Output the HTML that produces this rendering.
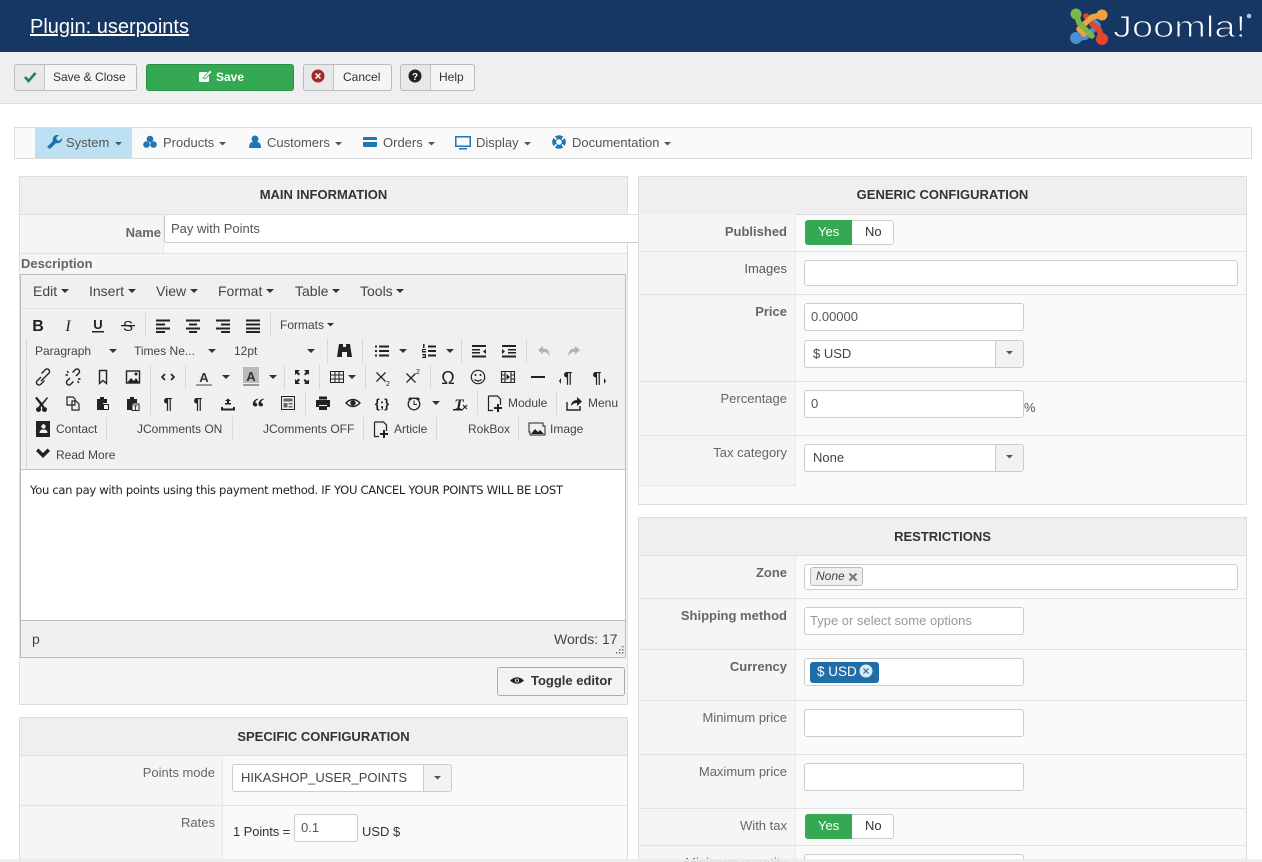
<!DOCTYPE html>
<html><head><meta charset="utf-8"><style>
html,body{margin:0;padding:0;background:#fff}
#p{position:relative;width:1262px;height:862px;overflow:hidden;font:13px/16px "Liberation Sans",sans-serif;color:#333}
.b{position:absolute;box-sizing:border-box}
.t{position:absolute;white-space:nowrap;line-height:16px}
.i{position:absolute;box-sizing:border-box;background:#fff;border:1px solid #ccc;border-radius:3px;white-space:nowrap;line-height:26px;padding-left:8px;color:#555;font-size:13px}
.l{position:absolute;white-space:nowrap;text-align:right;color:#666;font-size:13px;margin-top:1px}
.lb{font-weight:bold}
.h{position:absolute;box-sizing:border-box;height:38px;background:#efefef;border-bottom:1px solid #ddd;text-align:center;font-weight:bold;font-size:13px;line-height:36px;color:#333}
.btn{position:absolute;box-sizing:border-box;height:27px;background:#f5f5f5;border:1px solid #bbb;border-radius:3px;color:#333;font-size:12px}
.ib{position:absolute;left:0;top:0;bottom:0;background:#e8e8e8;border-right:1px solid #c4c4c4;border-radius:2px 0 0 2px}
.m{position:absolute;top:135px;font-size:13px;color:#555;white-space:nowrap;line-height:16px}
.e{position:absolute;font-size:12px;color:#444;white-space:nowrap;line-height:16px}
.s{position:absolute;width:1px;background:#d9d9d9}
.r{position:absolute;height:1px;background:#e3e3e3}
.sa{position:absolute;width:28px;background:#f2f2f2;border-left:1px solid #ccc;box-sizing:border-box;right:0;top:0;bottom:0;border-radius:0 3px 3px 0}
</style></head><body><div id="p">

<div class="b" style="left:0;top:0;width:1262px;height:52px;background:#163763"></div>
<a class="t" style="left:30px;top:15px;font-size:20px;line-height:24px;color:#fff;text-decoration:underline">Plugin: userpoints</a>
<div class="b" style="left:0;top:52px;width:1262px;height:52px;background:#efefef;border-bottom:1px solid #ddd"></div>

<div class="btn" style="left:14px;top:64px;width:123px"><div class="ib" style="width:29px"></div><span class="t" style="left:38px;top:4px">Save &amp; Close</span></div>
<div class="btn" style="left:146px;top:64px;width:148px;background:#34a853;border-color:#2b8f46;color:#fff;font-weight:bold"><span class="t" style="left:69px;top:4px">Save</span></div>
<div class="btn" style="left:303px;top:64px;width:89px"><div class="ib" style="width:29px"></div><span class="t" style="left:39px;top:4px">Cancel</span></div>
<div class="btn" style="left:400px;top:64px;width:75px"><div class="ib" style="width:29px"></div><span class="t" style="left:38px;top:4px">Help</span></div>

<div class="b" style="left:14px;top:127px;width:1238px;height:32px;background:#fafafa;border:1px solid #ddd"></div>
<div class="b" style="left:35px;top:128px;width:97px;height:30px;background:#bbe1f3"></div>
<span class="m" style="left:66px">System</span>
<span class="m" style="left:163px">Products</span>
<span class="m" style="left:267px">Customers</span>
<span class="m" style="left:383px">Orders</span>
<span class="m" style="left:476px">Display</span>
<span class="m" style="left:572px">Documentation</span>

<!-- left panel -->
<div class="b" style="left:19px;top:176px;width:609px;height:529px;background:#f5f5f5;border:1px solid #ddd"></div>
<div class="h" style="left:20px;top:177px;width:607px">MAIN INFORMATION</div>
<div class="b" style="left:163px;top:214px;width:464px;height:39px;background:#fafafa;border-left:1px solid #e8e8e8"></div>
<div class="r" style="left:20px;top:253px;width:607px"></div>
<div class="l lb" style="left:60px;width:101px;top:224px">Name</div>
<div class="i" style="left:164px;top:214px;width:490px;height:29px;padding-left:6px;line-height:27px;border-top-color:#ddd">Pay with Points</div>
<div class="t" style="left:21px;top:256px;font-weight:bold;color:#666">Description</div>

<div class="b" style="left:20px;top:274px;width:606px;height:384px;background:#f0f0f0;border:1px solid #bbb"></div>
<div class="r" style="left:21px;top:308px;width:604px;background:#e2e2e2"></div>
<div class="b" style="left:21px;top:469px;width:604px;height:152px;background:#fff;border-top:1px solid #c4c4c4;border-bottom:1px solid #bbb"></div>
<div class="t" style="left:30px;top:482px;font-size:11.6px;color:#222;font-family:'DejaVu Sans','Liberation Sans',sans-serif;letter-spacing:-.33px">You can pay with points using this payment method. IF YOU CANCEL YOUR POINTS WILL BE LOST</div>

<span class="e" style="left:33px;top:283px;font-size:14px">Edit</span>
<span class="e" style="left:89px;top:283px;font-size:14px">Insert</span>
<span class="e" style="left:156px;top:283px;font-size:14px">View</span>
<span class="e" style="left:218px;top:283px;font-size:14px">Format</span>
<span class="e" style="left:295px;top:283px;font-size:14px">Table</span>
<span class="e" style="left:360px;top:283px;font-size:14px">Tools</span>
<span class="e" style="left:280px;top:317px">Formats</span>
<span class="e" style="left:35px;top:343px">Paragraph</span>
<span class="e" style="left:134px;top:343px">Times Ne...</span>
<span class="e" style="left:234px;top:343px">12pt</span>
<span class="e" style="left:508px;top:395px">Module</span>
<span class="e" style="left:588px;top:395px">Menu</span>
<span class="e" style="left:56px;top:421px">Contact</span>
<span class="e" style="left:137px;top:421px">JComments ON</span>
<span class="e" style="left:263px;top:421px">JComments OFF</span>
<span class="e" style="left:394px;top:421px">Article</span>
<span class="e" style="left:468px;top:421px">RokBox</span>
<span class="e" style="left:550px;top:421px">Image</span>
<span class="e" style="left:56px;top:447px">Read More</span>
<span class="e" style="left:32px;top:631px;font-size:14px">p</span>
<span class="e" style="left:554px;top:631px;font-size:14px">Words: 17</span>

<div class="s" style="left:145px;top:313px;height:24px"></div><div class="s" style="left:270px;top:313px;height:24px"></div>
<div class="s" style="left:26px;top:339px;height:24px"></div><div class="s" style="left:327px;top:339px;height:24px"></div><div class="s" style="left:362px;top:339px;height:24px"></div><div class="s" style="left:461px;top:339px;height:24px"></div><div class="s" style="left:526px;top:339px;height:24px"></div>
<div class="s" style="left:26px;top:365px;height:24px"></div><div class="s" style="left:150px;top:365px;height:24px"></div><div class="s" style="left:185px;top:365px;height:24px"></div><div class="s" style="left:284px;top:365px;height:24px"></div><div class="s" style="left:319px;top:365px;height:24px"></div><div class="s" style="left:365px;top:365px;height:24px"></div><div class="s" style="left:430px;top:365px;height:24px"></div>
<div class="s" style="left:26px;top:391px;height:24px"></div><div class="s" style="left:150px;top:391px;height:24px"></div><div class="s" style="left:305px;top:391px;height:24px"></div><div class="s" style="left:477px;top:391px;height:24px"></div><div class="s" style="left:556px;top:391px;height:24px"></div>
<div class="s" style="left:26px;top:417px;height:24px"></div><div class="s" style="left:106px;top:417px;height:24px"></div><div class="s" style="left:232px;top:417px;height:24px"></div><div class="s" style="left:363px;top:417px;height:24px"></div><div class="s" style="left:436px;top:417px;height:24px"></div><div class="s" style="left:518px;top:417px;height:24px"></div>
<div class="s" style="left:26px;top:443px;height:26px"></div>

<div class="btn" style="left:497px;top:667px;width:128px;height:29px;background:#f3f3f3;font-weight:bold;font-size:13px;border-color:#aaa"><span class="t" style="left:33px;top:5px">Toggle editor</span></div>

<!-- specific -->
<div class="b" style="left:19px;top:717px;width:609px;height:160px;background:#fafafa;border:1px solid #ddd"></div>
<div class="h" style="left:20px;top:718px;width:607px;line-height:37px">SPECIFIC CONFIGURATION</div>
<div class="b" style="left:20px;top:756px;width:203px;height:110px;background:#f5f5f5;border-right:1px solid #e8e8e8"></div>
<div class="r" style="left:20px;top:805px;width:607px"></div>
<div class="r" style="left:20px;top:859px;width:607px"></div>
<div class="l" style="left:60px;width:155px;top:764px">Points mode</div>
<div class="i" style="left:232px;top:764px;width:220px;height:28px;color:#444">HIKASHOP_USER_POINTS<div class="sa"></div></div>
<div class="l" style="left:60px;width:155px;top:814px">Rates</div>
<span class="t" style="left:233px;top:824px;color:#333;letter-spacing:-.1px">1 Points =</span>
<div class="i" style="left:294px;top:814px;width:64px;height:28px;line-height:25px;padding-left:6px">0.1</div>
<span class="t" style="left:362px;top:824px;color:#333">USD $</span>

<!-- generic -->
<div class="b" style="left:638px;top:176px;width:609px;height:329px;background:#fafafa;border:1px solid #ddd"></div>
<div class="h" style="left:639px;top:177px;width:607px">GENERIC CONFIGURATION</div>
<div class="b" style="left:639px;top:214px;width:157px;height:272px;background:#f5f5f5;border-right:1px solid #e8e8e8;border-bottom:1px solid #e8e8e8"></div>
<div class="r" style="left:639px;top:251px;width:607px"></div>
<div class="r" style="left:639px;top:294px;width:607px"></div>
<div class="r" style="left:639px;top:381px;width:607px"></div>
<div class="r" style="left:639px;top:435px;width:607px"></div>
<div class="l lb" style="left:640px;width:147px;top:223px">Published</div>
<div class="l" style="left:640px;width:147px;top:260px;color:#555">Images</div>
<div class="l lb" style="left:640px;width:147px;top:303px">Price</div>
<div class="l" style="left:640px;width:147px;top:390px">Percentage</div>
<div class="l" style="left:640px;width:147px;top:444px">Tax category</div>

<div class="b" style="left:805px;top:220px;width:89px;height:25px;background:#fff;border:1px solid #ccc;border-radius:3px"></div>
<div class="b" style="left:805px;top:220px;width:47px;height:25px;background:#34a853;border-radius:3px 0 0 3px"></div>
<span class="t" style="left:818px;top:224px;color:#fff">Yes</span><span class="t" style="left:865px;top:224px;color:#333">No</span>

<div class="i" style="left:804px;top:260px;width:434px;height:26px"></div>
<div class="i" style="left:804px;top:303px;width:220px;height:28px;padding-left:6px">0.00000</div>
<div class="i" style="left:804px;top:340px;width:220px;height:28px;color:#444">$ USD<div class="sa"></div></div>
<div class="i" style="left:804px;top:390px;width:220px;height:28px;padding-left:6px">0</div>
<span class="t" style="left:1024px;top:400px;color:#555">%</span>
<div class="i" style="left:804px;top:444px;width:220px;height:28px;color:#444">None<div class="sa"></div></div>

<!-- restrictions -->
<div class="b" style="left:638px;top:517px;width:609px;height:360px;background:#fafafa;border:1px solid #ddd"></div>
<div class="h" style="left:639px;top:518px;width:607px;line-height:37px">RESTRICTIONS</div>
<div class="b" style="left:639px;top:556px;width:157px;height:310px;background:#f5f5f5;border-right:1px solid #e8e8e8"></div>
<div class="r" style="left:639px;top:598px;width:607px"></div>
<div class="r" style="left:639px;top:649px;width:607px"></div>
<div class="r" style="left:639px;top:700px;width:607px"></div>
<div class="r" style="left:639px;top:754px;width:607px"></div>
<div class="r" style="left:639px;top:808px;width:607px"></div>
<div class="r" style="left:639px;top:845px;width:607px"></div>
<div class="l lb" style="left:640px;width:147px;top:564px">Zone</div>
<div class="l lb" style="left:640px;width:147px;top:607px">Shipping method</div>
<div class="l lb" style="left:640px;width:147px;top:658px">Currency</div>
<div class="l" style="left:640px;width:147px;top:709px">Minimum price</div>
<div class="l" style="left:640px;width:147px;top:763px">Maximum price</div>
<div class="l" style="left:640px;width:147px;top:817px">With tax</div>
<div class="l" style="left:640px;width:147px;top:854px">Minimum quantity</div>

<div class="i" style="left:804px;top:564px;width:434px;height:26px"></div>
<div class="b" style="left:810px;top:567px;width:53px;height:19px;background:#eee;border:1px solid #bbb;border-radius:3px"></div>
<span class="t" style="left:816px;top:568px;font-style:italic;font-size:12px;color:#444">None</span>
<div class="i" style="left:804px;top:607px;width:220px;height:28px;padding-left:5px;color:#999">Type or select some options</div>
<div class="i" style="left:804px;top:658px;width:220px;height:28px"></div>
<div class="b" style="left:810px;top:662px;width:69px;height:21px;background:#1f6ea8;border-radius:3px"></div>
<span class="t" style="left:817px;top:664px;color:#fff;font-size:13.500px">$ USD</span>
<div class="i" style="left:804px;top:709px;width:220px;height:28px"></div>
<div class="i" style="left:804px;top:763px;width:220px;height:28px"></div>
<div class="b" style="left:805px;top:814px;width:89px;height:25px;background:#fff;border:1px solid #ccc;border-radius:3px"></div>
<div class="b" style="left:805px;top:814px;width:47px;height:25px;background:#34a853;border-radius:3px 0 0 3px"></div>
<span class="t" style="left:818px;top:818px;color:#fff">Yes</span><span class="t" style="left:865px;top:818px;color:#333">No</span>
<div class="i" style="left:804px;top:854px;width:220px;height:28px"></div>

<!-- icons overlay -->
<svg class="b" style="left:0;top:0" width="1262" height="862" viewBox="0 0 1262 862" font-family="Liberation Sans,sans-serif">
<!-- joomla logo -->
<g fill="none" stroke-linecap="round" stroke-linejoin="round" stroke-width="5.500">
<path d="M1102 39 L1099 29 L1086 16" stroke="#e8452c"/>
<path d="M1075 39 L1086 37 L1098 25 L1094 21" stroke="#4a90d0"/>
<path d="M1102 15 L1092 17 L1079 29 L1084 34" stroke="#f4a23b"/>
<path d="M1076 13 L1079 23 L1092 36" stroke="#7ab648"/>
<path d="M1092 24 L1099 30 L1102 39" stroke="#e8452c"/>
</g>
<circle cx="1076" cy="14" r="5.500" fill="#7ab648"/><circle cx="1102" cy="15" r="5.500" fill="#f4a23b"/><circle cx="1076" cy="38" r="6" fill="#4a90d0"/><circle cx="1102" cy="39" r="6" fill="#e8452c"/>
<text x="1113" y="37" font-size="31" fill="#fff" stroke="#163763" stroke-width="1" textLength="133" lengthAdjust="spacingAndGlyphs">Joomla!</text>
<circle cx="1249" cy="16" r="2.300" fill="#b9c3d2"/>

<!-- toolbar -->
<path d="M25 77l3.500 4 7-8" fill="none" stroke="#2f7d4f" stroke-width="2.600"/>
<circle cx="318" cy="76" r="6.500" fill="#a32a2a"/><path d="M315.500 73.500l5 5m0-5l-5 5" stroke="#fff" stroke-width="1.500"/>
<circle cx="415" cy="76" r="6.500" fill="#222"/><text x="415" y="80" font-size="10" font-weight="bold" fill="#fff" text-anchor="middle">?</text>
<rect x="199" y="72" width="10" height="10" rx="1.500" fill="#fff"/><path d="M203 78l7-8 2 2-7 7z" fill="#fff" stroke="#34a853" stroke-width=".8"/>

<!-- menu -->
<g fill="#1f76b5">
<path d="M47 147l6-6c-1-3 1-6 4-6l2 0-3 3 1 2 2 1 3-3c.5 3-2 6-6 5l-6 6z" fill="#1f6fb0"/>
<circle cx="150" cy="139" r="3.300"/><circle cx="146.500" cy="144.500" r="3.300"/><circle cx="153.500" cy="144.500" r="3.300"/>
<circle cx="255" cy="139" r="3.500"/><path d="M249 148c0-5 2-6.500 6-6.500s6 1.500 6 6.500z"/>
<rect x="363" y="137" width="14" height="10" rx="1"/><rect x="363" y="140" width="14" height="2" fill="#fff"/>
<path d="M455 136h16v11h-16z M456.500 137.500v8h13v-8z M459 148h8v1.500h-8z" fill-rule="evenodd"/>
<circle cx="559" cy="142" r="6.800"/></g><circle cx="559" cy="142" r="2.800" fill="#fff"/><path d="M554 137l2.500 2.500m8-2.500l-2.500 2.500m-8 7.500l2.500-2.500m8 2.500l-2.500-2.500" stroke="#fff" stroke-width="1.600"/>
<g fill="#555"><path d="M115 142h7l-3.500 3.500z"/><path d="M219 142h7l-3.500 3.500z"/><path d="M335 142h7l-3.500 3.500z"/><path d="M428 142h7l-3.500 3.500z"/><path d="M524 142h7l-3.500 3.500z"/><path d="M664 142h7l-3.500 3.500z"/></g>

<!-- editor menu carets -->
<g fill="#333"><path d="M61 289h8l-4 4z"/><path d="M128 289h8l-4 4z"/><path d="M190 289h8l-4 4z"/><path d="M266 289h8l-4 4z"/><path d="M332 289h8l-4 4z"/><path d="M396 289h8l-4 4z"/><path d="M327 323h7l-3.500 3.500z"/>
<path d="M109 349h8l-4 4z"/><path d="M208 349h8l-4 4z"/><path d="M307 349h8l-4 4z"/><path d="M399 349h8l-4 4z"/><path d="M446 349h8l-4 4z"/>
<path d="M222 375h8l-4 4z"/><path d="M269 375h8l-4 4z"/><path d="M348 375h8l-4 4z"/><path d="M432 401h8l-4 4z"/></g>

<g fill="#222" stroke="none">
<!-- row 1 -->
<text x="38" y="331" font-size="16" font-weight="bold" text-anchor="middle">B</text>
<text x="68" y="331" font-size="16" font-style="italic" font-family="Liberation Serif,serif" text-anchor="middle">I</text>
<text x="98" y="329" font-size="13" font-weight="bold" text-anchor="middle">U</text><rect x="92" y="331" width="12" height="1.500"/>
<text x="128" y="331" font-size="15" text-anchor="middle">S</text><rect x="121" y="325" width="14" height="1.300"/>
<path d="M156 319.500h14v2h-14zM156 323.500h9v2h-9zM156 327.500h14v2h-14zM156 331h9v2h-9z"/>
<path d="M186 319.500h14v2h-14zM189 323.500h8v2h-8zM186 327.500h14v2h-14zM189 331h8v2h-8z"/>
<path d="M216 319.500h14v2h-14zM221 323.500h9v2h-9zM216 327.500h14v2h-14zM221 331h9v2h-9z"/>
<path d="M246 319.500h14v2h-14zM246 323.500h14v2h-14zM246 327.500h14v2h-14zM246 331h14v2h-14z"/>
<!-- row 2 -->
<path d="M339 344h4v3h3v-3h4l2 13h-5v-5h-5v5h-5z"/>
<path d="M375 345.500h2v2h-2zM379 345.500h10v2h-10zM375 350h2v2h-2zM379 350h10v2h-10zM375 354.500h2v2h-2zM379 354.500h10v2h-10z"/>
<path d="M428 345.500h8v2h-8zM428 350h8v2h-8zM428 354.500h8v2h-8z"/><path d="M423 344h1.500v4h-1.500zM422 349h4v1h-3v1h3v1.500h-4zM422 354h4v4h-4v-1h3v-.5h-2v-1h2v-.5h-3z"/>
<path d="M472 345h14v2h-14zM472 349h8v1.500h-8zM472 352h8v1.500h-8zM472 355.500h14v2h-14zM486 349l-3 2.500 3 2.500z"/>
<path d="M502 345h14v2h-14zM508 349h8v1.500h-8zM508 352h8v1.500h-8zM502 355.500h14v2h-14zM502 349l3 2.500-3 2.500z"/>
<g fill="#b4b4b4"><path d="M538 350l5-4v2.500c5 0 7 3 6.500 8-1-3-3-4.500-6.500-4.500v2.500z"/><path d="M580 350l-5-4v2.500c-5 0-7 3-6.500 8 1-3 3-4.500 6.500-4.500v2.500z"/></g>
<!-- row 3 -->
<g fill="none" stroke="#222" stroke-width="1.400"><path d="M41 377l-4 4a2.500 2.500 0 0 0 3.500 3.500l4-4M45 377l4-4a2.500 2.500 0 0 0-3.500-3.500l-4 4M41 381l4-4"/>
<path d="M70 378l-3 3a2.500 2.500 0 0 0 3.500 3.500l3-3M76 376l3-3a2.500 2.500 0 0 0-3.500-3.500l-3 3M67 371l1.500 2M79 383l-1.500-2M65.500 375h2.500M80.500 379h-2.500"/>
<path d="M99.500 370.500h7v13l-3.500-3-3.500 3z"/><rect x="126.500" y="371" width="13" height="12"/></g>
<path d="M127 383l4-5 3 3 2-3 3.500 5z"/><circle cx="136" cy="374" r="1.500"/>
<path d="M165 374l-3 3 3 3M171 374l3 3-3 3" fill="none" stroke="#222" stroke-width="1.600"/>
<text x="204" y="382" font-size="13" font-weight="bold" text-anchor="middle" fill="#333">A</text><rect x="196" y="384" width="16" height="2" fill="#999"/>
<rect x="243" y="367" width="16" height="16" fill="#b9b9b9"/><text x="251" y="381" font-size="13" font-weight="bold" text-anchor="middle" fill="#333">A</text><rect x="243" y="384" width="16" height="2" fill="#999"/>
<path d="M295 370h5l-2 2 2 2-1.500 1.500-2-2-1.500 1.500zM309 370v5l-1.500-1.500-2 2-1.500-1.500 2-2-2-2zM295 384v-5l1.500 1.500 2-2 1.500 1.500-2 2 2 2zM309 384h-5l1.500-1.500-2-2 1.500-1.500 2 2 2-1.500z"/>
<path d="M330 371h14v12h-14z M331 372v2.500h3.500v-2.500z M335.500 372v2.500h3v-2.500z M339.500 372v2.500h3.500v-2.500z M331 375.500v3h3.500v-3z M335.500 375.500v3h3v-3z M339.500 375.500v3h3.500v-3z M331 379.500v2.500h3.500v-2.500z M335.500 379.500v2.500h3v-2.500z M339.500 379.500v2.500h3.500v-2.500z" fill-rule="evenodd"/>
<path d="M376.500 372.500l9 9m0-9l-9 9" stroke="#222" stroke-width="1.300"/><text x="388" y="386" font-size="7" text-anchor="middle">2</text>
<path d="M406.500 373.500l9 9m0-9l-9 9" stroke="#222" stroke-width="1.300"/><text x="418" y="374" font-size="7" text-anchor="middle">2</text>
<text x="448" y="384" font-size="18" text-anchor="middle">Ω</text>
<circle cx="478" cy="377" r="6.700" fill="none" stroke="#222" stroke-width="1.200"/><circle cx="475.500" cy="375" r="1"/><circle cx="480.500" cy="375" r="1"/><path d="M474.500 379.500q3.500 3 7 0" fill="none" stroke="#222" stroke-width="1.200"/>
<path d="M501.500 371.500h13v11h-13zM505 371.500v11M511 371.500v11M501.500 375h3.500M501.500 379h3.500M511 375h3.500M511 379h3.500" fill="none" stroke="#222" stroke-width="1.100"/><path d="M506.500 374l3.500 3-3.500 3z"/>
<rect x="531" y="376" width="14" height="2"/>
<text x="568" y="383" font-size="16" font-weight="bold" text-anchor="middle">¶</text><path d="M561 378v6l-2-3z"/>
<text x="597" y="383" font-size="16" font-weight="bold" text-anchor="middle">¶</text><path d="M604 378v6l2-3z"/>
<!-- row 4 -->
<path d="M37 397l5 6 5-6 1 1-5 6.500 1.500 2.500a2.500 2.500 0 1 1-2 1l-1-2-1 2a2.500 2.500 0 1 1-2-1l1.500-2.500-5-6.500z"/>
<g fill="none" stroke="#222" stroke-width="1.200"><path d="M67 397h6l2 2v6h-8zM72 401h4l3 3v6h-7z"/></g>
<path d="M97 399h3v-2h4v2h3v4h-4v7h-6z M103 404h6v6h-6z"/><path d="M103.500 404.500h5v5h-5z" fill="#f0f0f0" stroke="#222"/>
<path d="M127 399h3v-2h4v2h3v4h-4v7h-6z"/><path d="M132 404h7v6.500h-7z" fill="#f0f0f0" stroke="#222"/><text x="135.500" y="410" font-size="6" font-weight="bold" text-anchor="middle">T</text>
<text x="168" y="409" font-size="16" font-weight="bold" text-anchor="middle">¶</text><text x="198" y="409" font-size="16" font-weight="bold" text-anchor="middle">¶</text>
<path d="M221 407h2v1.500h10v-1.500h2v3.500h-14zM227 404h2v-3h2l-3-2.500-3 2.500h2z"/><rect x="225" y="403" width="6" height="1.500"/>
<text x="258" y="416" font-size="26" font-weight="bold" text-anchor="middle" font-family="Liberation Serif,serif">“</text>
<path d="M281 396h14v14h-14z M282 397v12h12v-12z" fill-rule="evenodd"/><path d="M283.500 398.500h9v3h-9zM283.500 403h4v4.500h-4zM288.500 403h4v1.500h-4zM288.500 406h4v1.500h-4z" fill="#666"/>
<path d="M316 400h14v7h-3v-2h-8v2h-3zM319 396.500h8v3h-8zM319 406h8v4h-8z"/>
<path d="M346 403q7-7 14 0q-7 7-14 0z" fill="none" stroke="#222" stroke-width="1.300"/><circle cx="353" cy="403" r="2.700"/>
<text x="382" y="408" font-size="13" font-weight="bold" text-anchor="middle">{;}</text>
<circle cx="414" cy="404" r="5.800" fill="none" stroke="#222" stroke-width="1.300"/><path d="M414 400.500v4h3" fill="none" stroke="#222"/><path d="M408 399l2.500-2 1 1-2.500 2zM420 399l-2.500-2-1 1 2.500 2z"/>
<text x="459" y="409" font-size="15" font-style="italic" font-family="Liberation Serif,serif" font-weight="bold" text-anchor="middle">T</text><rect x="453" y="409" width="10" height="1.500"/><path d="M463 405l4 4m0-4l-4 4" stroke="#222" stroke-width="1.200"/>
<path d="M488.500 396h9l3 3v6M493 410.500h-4.500V396" fill="none" stroke="#222" stroke-width="1.200"/><path d="M497 404h2v3h3v2h-3v3h-2v-3h-3v-2h3z"/>
<path d="M567 402v8h13v-4" fill="none" stroke="#222" stroke-width="1.400"/><path d="M571 406c0-4 3-6 6-6v-3l5 4.500-5 4.500v-3c-3 0-4 1-6 3z"/>
<!-- row 5-6 -->
<path d="M36 421h14v16H36z"/><circle cx="43.500" cy="426.500" r="2.200" fill="#f0f0f0"/><path d="M39.500 433c0-3 2-3.500 4-3.500s4 .5 4 3.500z" fill="#f0f0f0"/>
<path d="M374.500 422h9l3 3v6M379 436.500h-4.500V422" fill="none" stroke="#222" stroke-width="1.200"/><path d="M383 430h2v3h3v2h-3v3h-2v-3h-3v-2h3z"/>
<path d="M529 423h14v3h2v9h-15v-3h-1z" fill="none" stroke="#222" stroke-width="1"/><path d="M531 434l4-5 3 3 2-2 4 4z"/>
<path d="M36 451l2.500-2.500 4.500 4.500 4.500-4.500 2.500 2.500-7 7z"/>
<path d="M622 646h1.500v1.500H622zM619 649h1.500v1.500H619zM622 649h1.500v1.500H622zM616 652h1.500v1.500H616zM619 652h1.500v1.500H619zM622 652h1.500v1.500H622z" fill="#777"/>
<!-- toggle -->
<path d="M510 680.500q7-6.500 14 0q-7 6.500-14 0z"/><circle cx="517" cy="680.500" r="2" fill="#f3f3f3"/><circle cx="517" cy="680.500" r="1.200"/>
</g>
<!-- select arrows -->
<g fill="#555"><path d="M1006 351h7l-3.500 3.500z"/><path d="M1006 455h7l-3.500 3.500z"/><path d="M434 776h7l-3.500 3.500z"/></g>
<path d="M849.500 573.500l7 7m0-7l-7 7" stroke="#777" stroke-width="2"/>
<circle cx="866" cy="671" r="6.500" fill="#dde9f3"/><path d="M863.500 668.500l5 5m0-5l-5 5" stroke="#1f6ea8" stroke-width="1.200"/>
</svg>

<div class="b" style="left:0;top:859px;width:1262px;height:3px;background:rgba(235,235,235,.9)"></div>
</div></body></html>
